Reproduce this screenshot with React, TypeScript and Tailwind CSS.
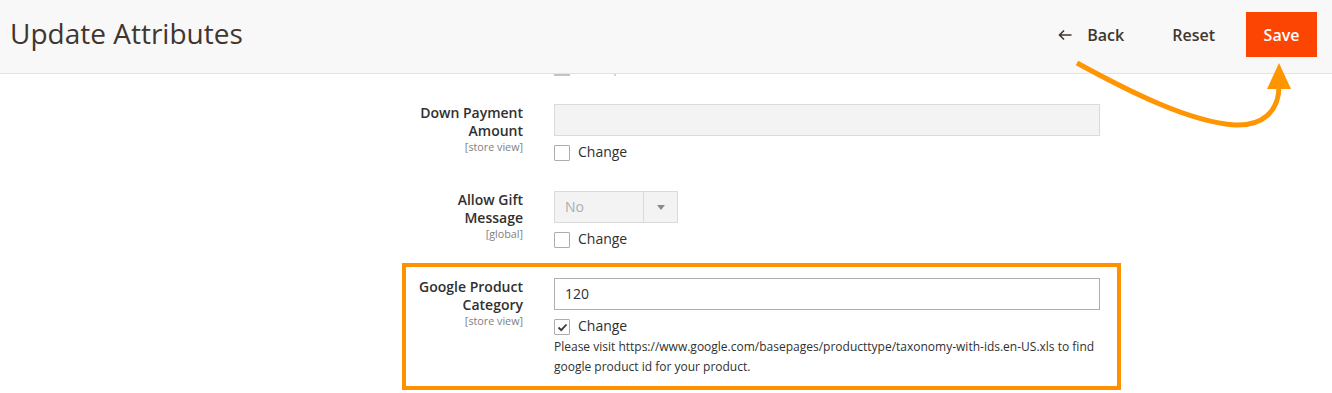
import { ReactNode } from 'react'

const font = { fontFamily: '"Open Sans", "Liberation Sans", sans-serif' }

function Checkbox({ checked = false }: { checked?: boolean }) {
  return (
    <span className="flex h-4 w-4 items-center justify-center rounded-[1px] border border-[#adadad] bg-white">
      {checked && (
        <svg width="11" height="9" viewBox="0 0 11 9">
          <path d="M1.5 4.5 L4.2 7.2 L9.5 1.5" fill="none" stroke="#41362f" strokeWidth="1.8" />
        </svg>
      )}
    </span>
  )
}

function ChangeToggle({ checked = false }: { checked?: boolean }) {
  return (
    <div className="mt-[9px] flex h-4 items-center gap-2">
      <Checkbox checked={checked} />
      <span className="-mt-[2px] text-[14px] leading-4 text-[#303030]">Change</span>
    </div>
  )
}

function Field({ label, scope, children, highlight = false }: { label: string[]; scope: string; children: ReactNode; highlight?: boolean }) {
  return (
    <div
      className={
        highlight
          ? 'flex w-[719px] border-4 border-[#ff9100] pt-[11px] pb-[9px]'
          : 'flex w-[719px] border-4 border-transparent'
      }
    >
      <div className="w-[117px] text-right">
        {label.map((l) => (
          <div key={l} className="text-[14px] font-semibold leading-[18px] text-[#303030]">
            {l}
          </div>
        ))}
        <div className="text-[10.75px] leading-[14px] text-[#808080]">{scope}</div>
      </div>
      <div className="ml-[31px] w-[546px]">{children}</div>
    </div>
  )
}

export default function App() {
  return (
    <div className="relative h-[393px] w-[1332px] overflow-hidden bg-white" style={font}>
      {/* page header */}
      <header className="flex h-[74px] items-start justify-between border-b border-[#e3e3e3] bg-[#f8f8f8] pl-[10px] pr-[15px]">
        <h1 className="pt-[13px] text-[28px] leading-[40px] text-[#41362f]">Update Attributes</h1>
        <div className="flex items-center pt-[12px]">
          <button className="flex h-[45px] items-center gap-[15px] px-0 text-[16px] font-semibold text-[#41362f]">
            <svg width="14" height="12" viewBox="0 0 14 12">
              <path d="M13.5 6 H1.5 M6 1.5 L1.5 6 L6 10.5" fill="none" stroke="#41362f" strokeWidth="1.6" />
            </svg>
            Back
          </button>
          <button className="ml-[48px] h-[45px] text-[16px] font-semibold text-[#41362f]">Reset</button>
          <button className="ml-[31px] h-[45px] w-[71px] bg-[#fd4503] text-[16px] font-semibold text-white">Save</button>
        </div>
      </header>

      <div className="ml-[554px] flex h-[2px] items-start gap-[44px]">
        <span className="h-[2px] w-[16px] bg-[#c4c4c4]" />
        <span className="h-[2px] w-[2px] bg-[#d4d4d4]" />
      </div>

      <main className="ml-[402px] flex flex-col pt-[24px]">
        <Field label={['Down Payment', 'Amount']} scope="[store view]">
          <div className="h-8 w-full border border-[#dadada] bg-[#f3f3f3]" />
          <ChangeToggle />
        </Field>

        <div className="h-[22px]" />

        <Field label={['Allow Gift', 'Message']} scope="[global]">
          <div className="flex h-8 w-[124px] border border-[#dadada] bg-[#f3f3f3]">
            <span className="flex-1 pl-[10px] text-[14px] leading-[30px] text-[#adadad]">No</span>
            <span className="flex w-[34px] items-center justify-center border-l border-[#dadada]">
              <svg width="8" height="5" viewBox="0 0 8 5">
                <path d="M0 0 H8 L4 5 Z" fill="#8a8a8a" />
              </svg>
            </span>
          </div>
          <ChangeToggle />
        </Field>

        <div className="h-[11px]" />

        <Field label={['Google Product', 'Category']} scope="[store view]" highlight>
          <div className="h-8 w-full border border-[#adadad] bg-white pl-[10px] text-[14px] leading-[30px] text-[#303030]">
            120
          </div>
          <ChangeToggle checked />
          <p className="mt-[2px] text-[12px] leading-[20px] text-[#303030]">
            Please visit https://www.google.com/basepages/producttype/taxonomy-with-ids.en-US.xls to find google
            product id for your product.
          </p>
        </Field>
      </main>

      {/* annotation arrow pointing to Save */}
      <svg className="pointer-events-none absolute left-0 top-0" width="1332" height="393" viewBox="0 0 1332 393">
        <path
          d="M1077 63 C1130 92 1190 122 1235 125 C1262 126 1279 112 1279 86"
          fill="none"
          stroke="#ff9500"
          strokeWidth="5"
        />
        <polygon points="1279,63 1267,89 1291,89" fill="#ff9500" />
      </svg>
    </div>
  )
}
